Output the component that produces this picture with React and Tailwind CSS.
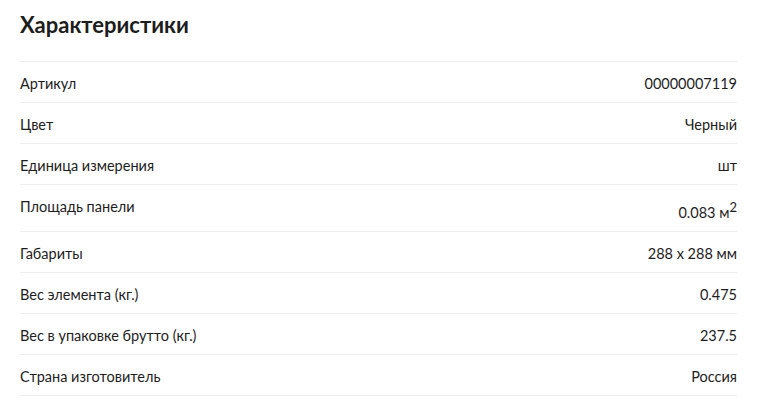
import React from 'react';

const rows = [
  { label: 'Артикул', value: '00000007119' },
  { label: 'Цвет', value: 'Черный' },
  { label: 'Единица измерения', value: 'шт' },
  { label: 'Площадь панели', value: '0.083 м', sup: '2' },
  { label: 'Габариты', value: '288 х 288 мм' },
  { label: 'Вес элемента (кг.)', value: '0.475' },
  { label: 'Вес в упаковке брутто (кг.)', value: '237.5' },
  { label: 'Страна изготовитель', value: 'Россия' },
];

export default function App() {
  return (
    <div className="w-[772px] h-[415px] bg-white pl-5 pr-[35px] text-[#1d1d1d] font-['Lato',sans-serif]">
      <h2 className="pt-[10px] mb-[21px] text-[22px] leading-[30px] font-bold">Характеристики</h2>
      <div className="border-b border-[#eceef2]">
        {rows.map((r) => (
          <div
            key={r.label}
            className="flex justify-between items-start border-t border-[#eceef2] pt-[12px] pb-[8px] text-[14.5px] leading-[20px]"
          >
            <span>{r.label}</span>
            <span className="text-right">
              {r.value}
              {r.sup && <span className="align-super text-[13px] leading-[20px]">{r.sup}</span>}
            </span>
          </div>
        ))}
      </div>
    </div>
  );
}
